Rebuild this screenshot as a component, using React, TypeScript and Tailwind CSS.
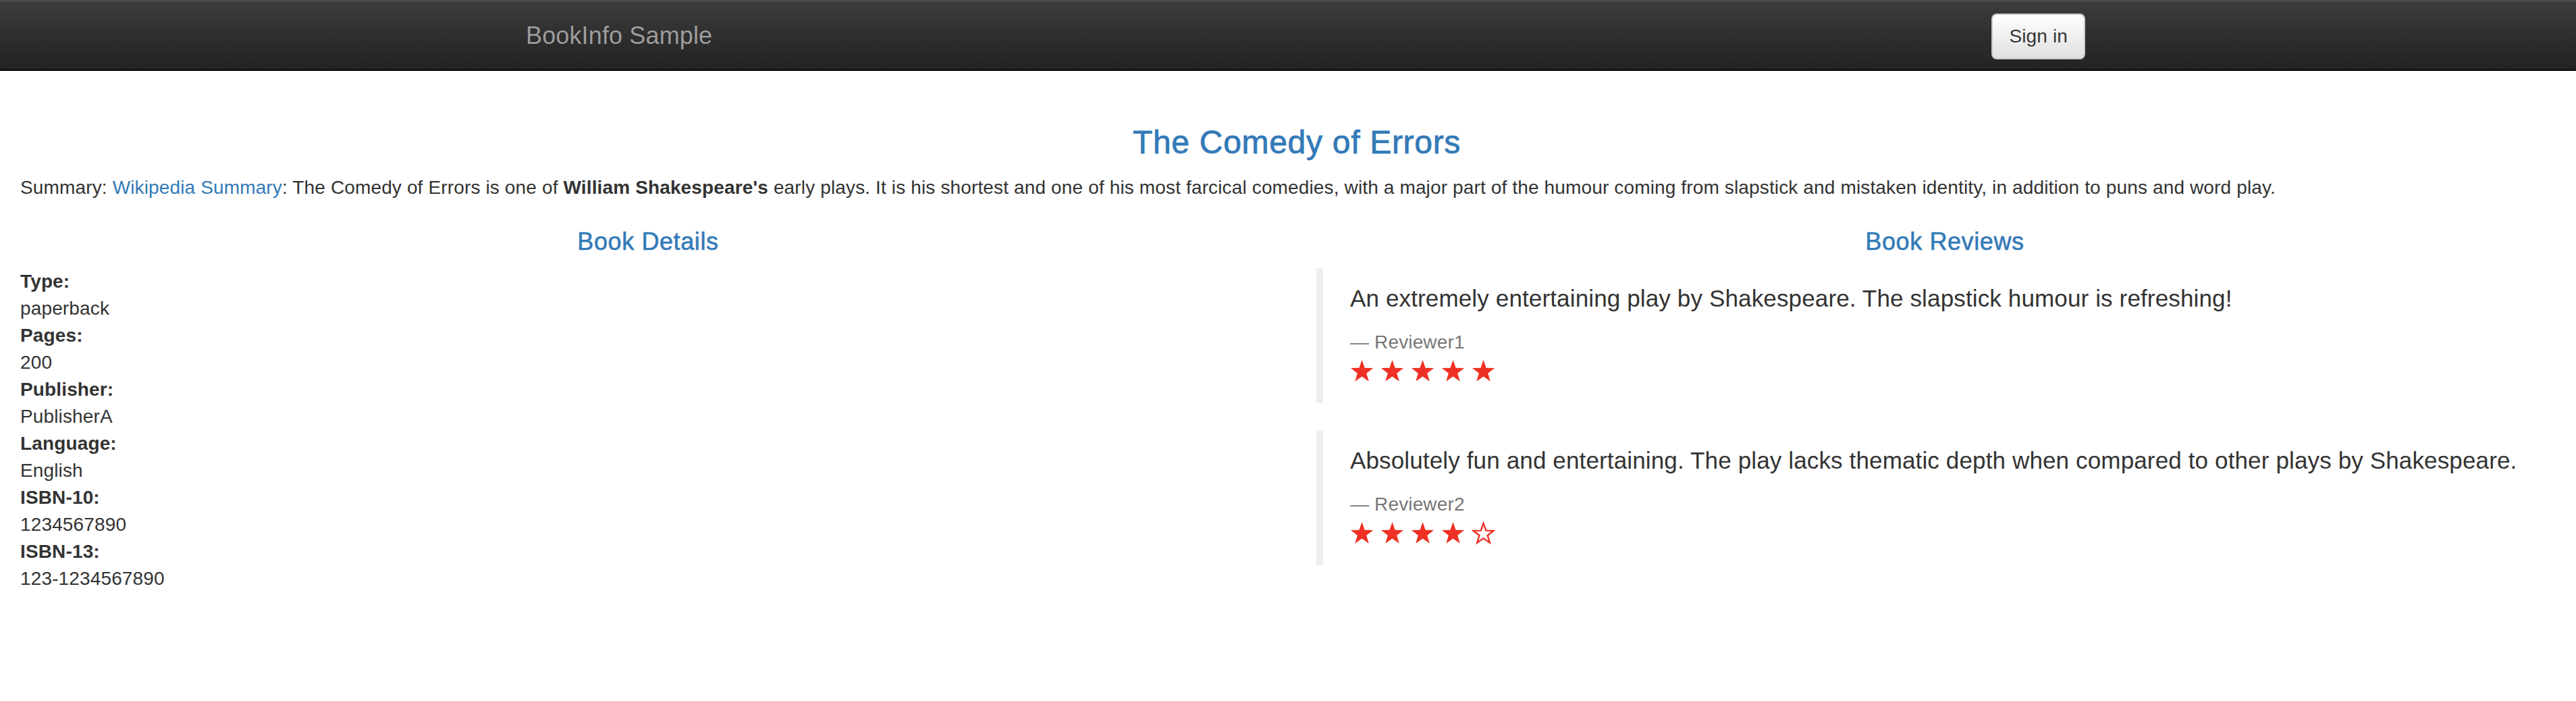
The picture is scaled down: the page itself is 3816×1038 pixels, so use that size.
import React from "react";

type Review = {
  text: string;
  reviewer: string;
  stars: number;
};

const reviews: Review[] = [
  {
    text: "An extremely entertaining play by Shakespeare. The slapstick humour is refreshing!",
    reviewer: "Reviewer1",
    stars: 5,
  },
  {
    text: "Absolutely fun and entertaining. The play lacks thematic depth when compared to other plays by Shakespeare.",
    reviewer: "Reviewer2",
    stars: 4,
  },
];

const details: [string, string][] = [
  ["Type:", "paperback"],
  ["Pages:", "200"],
  ["Publisher:", "PublisherA"],
  ["Language:", "English"],
  ["ISBN-10:", "1234567890"],
  ["ISBN-13:", "123-1234567890"],
];

const STAR =
  "17.5,1 21.61,12.84 34.14,13.09 24.16,20.66 27.79,32.66 17.5,25.5 7.21,32.66 10.84,20.66 0.86,13.09 13.39,12.84";

function Star({ filled }: { filled: boolean }) {
  return (
    <svg width="35" height="35" viewBox="0 0 35 35" aria-hidden="true">
      {filled ? (
        <polygon points={STAR} fill="#ee3124" />
      ) : (
        <polygon
          points={STAR}
          fill="#fff"
          stroke="#ee3124"
          strokeWidth="2.6"
          strokeLinejoin="miter"
          transform="translate(1.6 1.9) scale(0.91)"
        />
      )}
    </svg>
  );
}

export default function App() {
  return (
    <div className="min-h-[1038px] bg-white text-[#333] tracking-[0.14px] font-['Liberation_Sans',Arial,sans-serif]">
      {/* Navbar */}
      <nav className="h-[105px] flex items-start border-t-[3px] border-t-[#4a4a4a] border-b-2 border-b-[#080808] bg-linear-to-b from-[#3c3c3c] to-[#222]">
        <a
          href="#"
          className="ml-[779px] pt-[30px] text-[36px] leading-[40px] text-[#9d9d9d] [text-shadow:0_-1px_0_rgba(0,0,0,0.25)]"
        >
          BookInfo Sample
        </a>
        <button
          type="button"
          className="ml-auto mr-[727px] mt-[17px] h-[68px] px-[24px] py-[12px] rounded-[8px] border-2 border-[#c8c8c8] bg-linear-to-b from-white to-[#e0e0e0] text-[28px] leading-[40px] text-[#333] [text-shadow:0_1px_0_#fff] shadow-[inset_0_1px_0_rgba(255,255,255,0.15),0_1px_1px_rgba(0,0,0,0.075)]"
        >
          Sign in
        </button>
      </nav>

      <main className="pl-[30px] pr-[4px]">
        {/* Title + summary */}
        <h3 className="mt-[80px] mb-[20px] text-center text-[48px] leading-[52.8px] tracking-[0.7px] text-[#337ab7] [-webkit-text-stroke:0.8px_#337ab7]">
          The Comedy of Errors
        </h3>
        <p className="mb-[40px] text-[28px] leading-[40px]">
          Summary:{" "}
          <a href="#" className="text-[#337ab7]">
            Wikipedia Summary
          </a>
          : The Comedy of Errors is one of <b>William Shakespeare's</b> early plays. It is his
          shortest and one of his most farcical comedies, with a major part of the humour coming
          from slapstick and mistaken identity, in addition to puns and word play.
        </p>

        <div className="grid grid-cols-[1860px_1fr] gap-[60px]">
          {/* Book details */}
          <section>
            <h4 className="mb-[20px] text-center text-[36px] leading-[39.6px] tracking-[0.6px] text-[#337ab7] [-webkit-text-stroke:0.6px_#337ab7]">
              Book Details
            </h4>
            <dl className="text-[28px] leading-[40px]">
              {details.map(([label, value]) => (
                <React.Fragment key={label}>
                  <dt className="font-bold">{label}</dt>
                  <dd>{value}</dd>
                </React.Fragment>
              ))}
            </dl>
          </section>

          {/* Book reviews */}
          <section>
            <h4 className="mb-[20px] text-center text-[36px] leading-[39.6px] tracking-[0.6px] text-[#337ab7] [-webkit-text-stroke:0.6px_#337ab7]">
              Book Reviews
            </h4>
            {reviews.map((r) => (
              <blockquote
                key={r.reviewer}
                className="mb-[40px] border-l-[10px] border-[#eee] px-[40px] py-[20px] text-[35px] leading-[50px]"
              >
                <p className="mb-[20px]">{r.text}</p>
                <small className="block text-[28px] leading-[40px] text-[#777]">
                  {"\u2014\u00a0"}
                  {r.reviewer}
                </small>
                <div className="flex h-[50px] gap-[10px] pt-[5px]">
                  {[1, 2, 3, 4, 5].map((i) => (
                    <Star key={i} filled={i <= r.stars} />
                  ))}
                </div>
              </blockquote>
            ))}
          </section>
        </div>
      </main>
    </div>
  );
}
